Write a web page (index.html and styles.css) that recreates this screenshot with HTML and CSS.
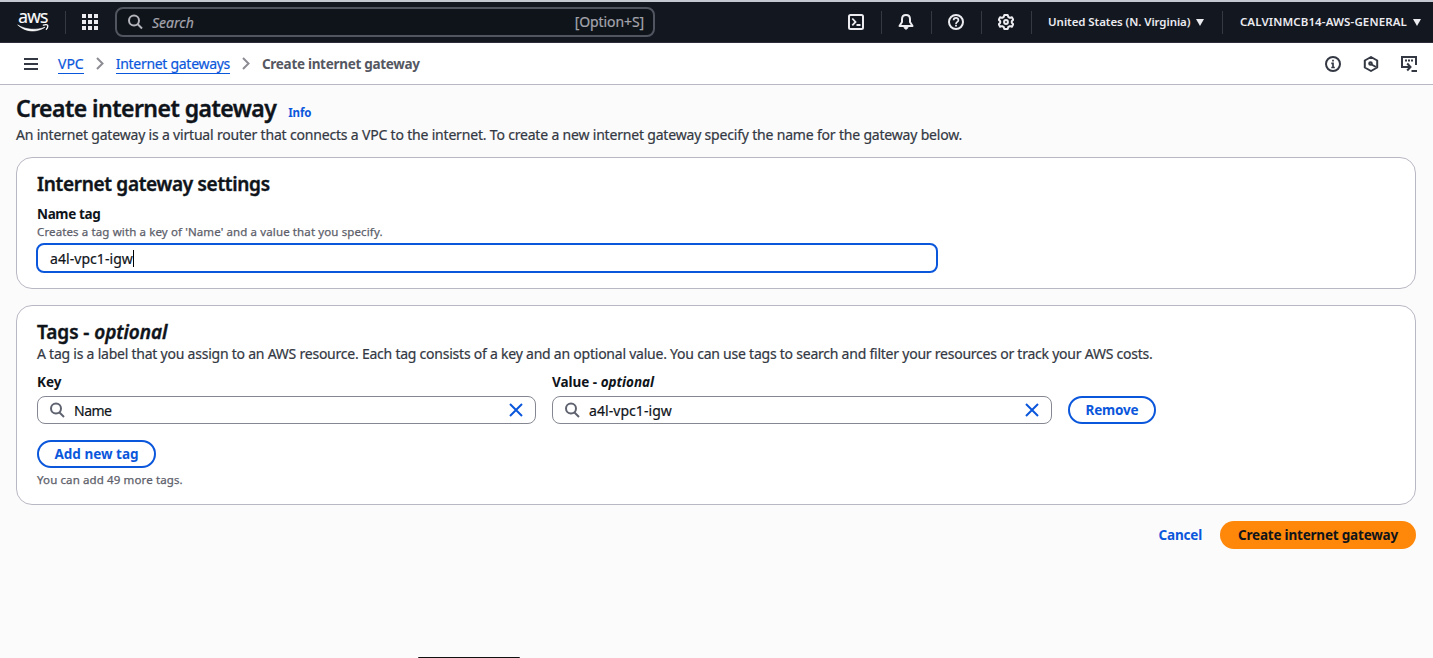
FILE: index.html
```html
<!DOCTYPE html>
<html lang="en">
<head>
<meta charset="utf-8">
<title>Create internet gateway</title>
<link rel="stylesheet" href="styles.css">
</head>
<body>
<header class="topnav">
  <div class="logo"><span class="logo-text">aws</span>
    <svg class="logo-smile" width="32" height="9" viewBox="0 0 32 9" fill="none" stroke="#fff" stroke-linecap="round"><path d="M1 1.200C9 6 20 6.500 28 3.200C20 8.600 9 8.600 1 1.200Z" fill="#fff" stroke-width=".6"/><path d="M26.300 1.100C28 .6 30 .6 30.500 1.200C31 2 30.400 4 29.300 5.300" stroke-width="1.300"/></svg>
  </div>
  <i class="sep sep-logo"></i>
  <svg class="grid-icon" width="16" height="16" viewBox="0 0 16 16" fill="#ebebf0"><path d="M0 0h4v4H0zM6 0h4v4H6zM12 0h4v4h-4zM0 6h4v4H0zM6 6h4v4H6zM12 6h4v4h-4zM0 12h4v4H0zM6 12h4v4H6zM12 12h4v4h-4z"/></svg>
  <div class="search">
    <svg width="16" height="16" viewBox="0 0 16 16" fill="none" stroke="#b4b4bb" stroke-width="2"><circle cx="6" cy="6.500" r="5"/><path d="M9.500 10L14 14.500"/></svg>
    <span class="search-hint">Search</span><span class="search-key">[Option+S]</span>
  </div>
  <div class="nav-right">
    <svg width="16" height="16" viewBox="0 0 16 16" fill="none" stroke="#ebebf0" stroke-width="2"><rect x="1" y="1" width="14" height="14" rx="1.500"/><path d="M4.300 4.500L7.500 8L4.300 11.300M8.500 11H12.500" stroke-width="1.800"/></svg>
    <i class="sep"></i>
    <svg width="16" height="16" viewBox="0 0 16 16" fill="none" stroke="#ebebf0" stroke-width="2" stroke-linejoin="round"><path d="M8 1C5.300 1 4 3 4 5.200V8L1.500 12H14.500L12 8V5.200C12 3 10.700 1 8 1Z"/><path d="M6 12.500C6 16 10 16 10 12.500" fill="#ebebf0" stroke-width="1"/></svg>
    <i class="sep"></i>
    <svg width="16" height="16" viewBox="0 0 16 16" fill="none" stroke="#ebebf0"><circle cx="8" cy="8" r="7" stroke-width="2"/><path d="M5.600 6.300C5.600 3.200 10.500 3.200 10.400 6.200C10.400 7.800 8 7.900 8 10" stroke-width="1.700"/><path d="M8 10.800V12.500" stroke-width="1.800"/></svg>
    <i class="sep"></i>
    <svg width="16" height="16" viewBox="0 0 16 16" fill="none" stroke="#ebebf0" stroke-width="2" stroke-linejoin="round"><path d="M6.300 1H9.700L10.300 3L12 3.900L13.900 3.200L15.200 5.700L13.800 7.200V8.800L15.200 10.300L13.900 12.800L12 12.100L10.300 13L9.700 15H6.300L5.700 13L4 12.100L2.100 12.800L.8 10.300L2.200 8.800V7.200L.8 5.700L2.100 3.200L4 3.900L5.700 3Z"/><circle cx="8" cy="8" r="1.900"/></svg>
    <i class="sep"></i>
    <span class="nav-text region">United States (N. Virginia)</span><i class="caret"></i>
    <i class="sep sep-account"></i>
    <span class="nav-text account">CALVINMCB14-AWS-GENERAL</span><i class="caret"></i>
  </div>
</header>
<nav class="crumbs">
  <svg class="menu" width="14" height="12" viewBox="0 0 14 12" fill="#333843"><path d="M0 0h14v2H0zM0 5h14v2H0zM0 10h14v2H0z"/></svg>
  <a class="link crumb-vpc">VPC</a>
  <svg class="chev" width="8" height="13" viewBox="0 0 8 13" fill="none" stroke="#8c8c94" stroke-width="2"><path d="M1 1L6.500 6.500L1 12"/></svg>
  <a class="link crumb-ig">Internet gateways</a>
  <svg class="chev" width="8" height="13" viewBox="0 0 8 13" fill="none" stroke="#8c8c94" stroke-width="2"><path d="M1 1L6.500 6.500L1 12"/></svg>
  <b class="current">Create internet gateway</b>
  <div class="tools">
    <svg width="16" height="16" viewBox="0 0 16 16" fill="none" stroke="#333843"><circle cx="8" cy="8" r="7" stroke-width="2"/><path d="M8 3.700V5.500M6.300 7.400H8V11.500M6.300 11.500H9.800" stroke-width="1.700"/></svg>
    <svg width="16" height="16" viewBox="0 0 16 16" fill="none" stroke="#333843" stroke-width="2" stroke-linejoin="round"><path d="M8 1L14.200 4.500V11.500L8 15L1.800 11.500V4.500Z"/><circle cx="7.500" cy="7.500" r="1.300"/><path d="M8.500 8.500L13 11"/></svg>
    <svg width="17" height="16" viewBox="0 0 17 16" fill="none" stroke="#333843" stroke-width="2"><path d="M4 11H1V1H15V9"/><path d="M4 4.500h2M7 4.500h2M10 4.500h2M4 11H9M6.200 7.500L9.500 11L6.200 14.500M10.500 15H16"/></svg>
  </div>
</nav>
<main class="page">
  <div class="title-row"><h1>Create internet gateway</h1><a class="info">Info</a></div>
  <p class="desc lead">An internet gateway is a virtual router that connects a VPC to the internet. To create a new internet gateway specify the name for the gateway below.</p>
  <section class="card settings">
    <h2 class="h-settings">Internet gateway settings</h2>
    <label class="label name-label">Name tag</label>
    <p class="hint hint-name">Creates a tag with a key of 'Name' and a value that you specify.</p>
    <div class="input focused"><span class="val">a4l-vpc1-igw</span><i class="cursor"></i></div>
  </section>
  <section class="card tags">
    <h2 class="h-tags">Tags - <em>optional</em></h2>
    <p class="desc tag-desc">A tag is a label that you assign to an AWS resource. Each tag consists of a key and an optional value. You can use tags to search and filter your resources or track your AWS costs.</p>
    <div class="fields">
      <div class="field key"><label class="label key-label">Key</label>
        <div class="input"><svg width="16" height="16" viewBox="0 0 16 16" fill="none" stroke="#5f6370" stroke-width="2"><circle cx="7" cy="6.500" r="5"/><path d="M10.500 10.500L15 15"/></svg><span class="val val-name">Name</span><svg class="clear" width="14" height="14" viewBox="0 0 14 14" stroke="#0b57dc" stroke-width="2"><path d="M1 1L13 13M13 1L1 13"/></svg></div>
      </div>
      <div class="field value"><label class="label value-label">Value - <em>optional</em></label>
        <div class="input"><svg width="16" height="16" viewBox="0 0 16 16" fill="none" stroke="#5f6370" stroke-width="2"><circle cx="7" cy="6.500" r="5"/><path d="M10.500 10.500L15 15"/></svg><span class="val">a4l-vpc1-igw</span><svg class="clear" width="14" height="14" viewBox="0 0 14 14" stroke="#0b57dc" stroke-width="2"><path d="M1 1L13 13M13 1L1 13"/></svg></div>
      </div>
      <button class="btn remove"><span>Remove</span></button>
    </div>
    <button class="btn add"><span>Add new tag</span></button>
    <p class="hint hint-more">You can add 49 more tags.</p>
  </section>
  <div class="actions"><a class="cancel">Cancel</a><button class="btn primary"><span>Create internet gateway</span></button></div>
</main>
<div class="dock"></div>
</body>
</html>
```
FILE: styles.css
```css
* { box-sizing: border-box; }
body { margin: 0; height: 658px; overflow: hidden; position: relative; background: #fbfbfb; color: #0f141a; font: 14px/20px "Noto Sans", "Open Sans", sans-serif; }
h1, h2, p { margin: 0; white-space: nowrap; }
svg { display: block; flex: none; }
span, a, b, label, h1, h2 { white-space: nowrap; }
.topnav { height: 43px; border-top: 2px solid #c4c8d0; border-bottom: 1px solid #2c2d39; background: #131820; display: flex; align-items: center; }
.logo { width: 32px; margin-left: 17px; height: 22px; display: flex; flex-direction: column; align-items: center; }
.logo-text { color: #fff; font: 500 17.500px/10px "Open Sans", sans-serif; height: 13px; letter-spacing: -.7px; -webkit-text-stroke: .2px; }
.logo-smile { margin-top: 1px; }
.sep { width: 1px; height: 23px; background: #353942; flex: none; }
.sep-logo { margin-left: 16px; }
.grid-icon { margin-left: 16px; }
.search { margin-left: 17px; width: 540px; height: 30px; border: 2px solid #50555f; border-radius: 8px; background: #0f141a; display: flex; align-items: center; padding: 0 9px 0 11px; color: #a4a4ad; }
.search-hint { font-style: italic; margin-left: 8px; flex: 1; padding-top: 1px; -webkit-text-stroke: .2px; }
.search-key { letter-spacing: -.1px; -webkit-text-stroke: .2px; }
.nav-right { margin-left: auto; display: flex; align-items: center; padding-right: 12px; }
.nav-right .sep { margin: 0 16.500px; }
.nav-right .sep-account { margin-left: 18px; }
.nav-text { color: #ebebf0; font-weight: 600; font-size: 11.500px; line-height: 20px; padding-bottom: 1px; }
.region { letter-spacing: -.08px; }
.account { letter-spacing: .13px; }
.caret { border: 4px solid transparent; border-top: 7px solid #ebebf0; border-bottom: 0; margin-left: 6px; }
.crumbs { height: 42px; background: #fff; border-bottom: 1px solid #b8b8c4; display: flex; align-items: center; padding: 0 15px 0 24px; }
.link { color: #0b57dc; border-bottom: 1px solid #0b57dc; line-height: 19px; -webkit-text-stroke: .2px; }
.crumb-vpc { margin-left: 20px; }
.crumb-ig { letter-spacing: -.29px; }
.chev { margin: 0 12px; }
.current { color: #545762; font-size: 13.500px; letter-spacing: -.3px; }
.tools { margin-left: auto; display: flex; align-items: center; gap: 22px; }
.page { padding: 10px 17px 0 16px; }
.title-row { display: flex; align-items: baseline; height: 30px; }
h1 { font-size: 23px; line-height: 26px; font-weight: 600; letter-spacing: -.54px; -webkit-text-stroke: .4px; }
.info { color: #0b57dc; font-size: 11.500px; font-weight: 700; margin-left: 12px; letter-spacing: -.1px; }
.desc { color: #333843; height: 20px; -webkit-text-stroke: .2px; }
.lead { letter-spacing: -.185px; }
.card { border: 1px solid #b8b8c4; border-radius: 16px; background: #fff; padding: 14px 20px 0; display: flex; flex-direction: column; align-items: flex-start; }
.settings { margin-top: 12px; height: 132px; }
.tags { margin-top: 16px; height: 200px; }
h2 { font-size: 19px; line-height: 24px; font-weight: 600; letter-spacing: -.31px; -webkit-text-stroke: .4px; }
.h-tags { letter-spacing: -.05px; }
.label { font-weight: 700; font-size: 13.500px; display: block; line-height: 20px; }
.name-label { margin-top: 8px; letter-spacing: -.35px; }
.key-label { letter-spacing: 0; }
.value-label { letter-spacing: -.02px; }
.hint { color: #5d606a; font-size: 11.500px; line-height: 15px; height: 16px; letter-spacing: .12px; -webkit-text-stroke: .25px; }
.input { height: 28px; border: 1px solid #858892; border-radius: 8px; background: #fff; display: flex; align-items: center; padding: 0 12px 0 11px; }
.input svg + span { margin-left: 9px; }
.val { padding-top: 2px; letter-spacing: .06px; -webkit-text-stroke: .2px; }
.val-name { letter-spacing: -.5px; }
.clear { margin-left: auto; }
.focused { width: 902px; height: 30px; border: 2px solid #0b57dc; margin: 3px 0 0 -1px; padding-left: 12px; }
.cursor { width: 1px; height: 17px; background: #000; }
.tag-desc { letter-spacing: -.231px; }
.fields { display: flex; gap: 16px; align-items: flex-end; margin-top: 8px; }
.key { width: 499px; }
.value { width: 500px; }
.field .label { height: 24px; }
.btn { height: 28px; border: 2px solid #0b57dc; border-radius: 14px; color: #0b57dc; background: #fff; font: 700 13.500px/20px "Noto Sans", sans-serif; padding: 0; display: flex; justify-content: center; align-items: center; letter-spacing: 0; }
.remove { width: 88px; letter-spacing: -.2px; }
.add { width: 119px; margin-top: 16px; }
.hint-more { margin-top: 4px; }
.actions { display: flex; justify-content: flex-end; align-items: center; margin-top: 16px; }
.cancel { color: #0b57dc; font-size: 13.500px; font-weight: 700; margin-right: 18px; letter-spacing: -.2px; }
.primary { width: 196px; background: #ff870a; border: 0; color: #0f141a; letter-spacing: -.2px; }
.dock { position: absolute; left: 418px; bottom: 0; width: 102px; height: 1px; background: #111; border-radius: 1px 1px 0 0; }
```
